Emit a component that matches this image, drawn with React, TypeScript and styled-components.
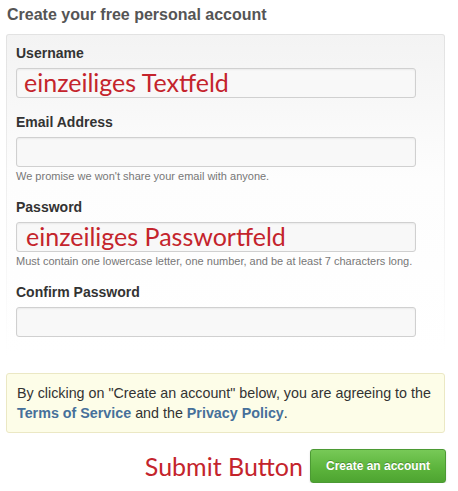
import React from 'react'
import styled, { createGlobalStyle } from 'styled-components'

const GlobalStyle = createGlobalStyle`
    html, body {
        margin: 0;
        padding: 0;
        background: #fff;
    }
    body {
        font-family: "Liberation Sans", Arial, sans-serif;
    }
`

const Page = styled.div`
    width: 439px;
    padding: 5px 0 0 6px;
`

const Title = styled.h2`
    margin: 0 0 10px 1px;
    font-size: 16px;
    line-height: 19px;
    font-weight: bold;
    color: #555;
`

const Panel = styled.div`
    border: 1px solid transparent;
    border-bottom: 0;
    border-radius: 3px 3px 0 0;
    background:
        linear-gradient(#f3f3f3, #fdfdfd 45%, #fff 100%) padding-box,
        linear-gradient(#e2e2e2, #f3f3f3 60%, #fff 100%) border-box;
    padding: 9px 29px 18px 9px;
`

const Field = styled.div`
    display: flex;
    flex-direction: column;
    align-items: flex-start;

    & + & {
        margin-top: 15px;
    }
`

const Label = styled.label`
    font-size: 14px;
    line-height: 18px;
    font-weight: bold;
    color: #333;
    margin-bottom: 6px;
`

const Input = styled.input<{ $indent?: number }>`
    box-sizing: border-box;
    width: 400px;
    height: 30px;
    margin: 0;
    border: 1px solid #d0d0d0;
    border-radius: 3px;
    background: #f8f8f8;
    box-shadow: inset 0 1px 2px rgba(0, 0, 0, 0.06);
    padding: 0 0 2px ${p => p.$indent ?? 7}px;
    font-family: Lato, "Open Sans", sans-serif;
    font-size: 25px;
    color: #c4242c;
    outline: none;
`

const Hint = styled.p`
    margin: 2px 0 0;
    font-size: 11px;
    line-height: 14px;
    color: #777;
`

const Notice = styled.div`
    margin-top: 18px;
    border: 1px solid #ebe8c4;
    border-radius: 3px;
    background: #fdfde8;
    padding: 9px 6px 9px 10px;
    font-size: 14.3px;
    line-height: 20px;
    color: #333;

    a {
        color: #46709a;
        font-weight: bold;
        text-decoration: none;
    }
`

const Actions = styled.div`
    display: flex;
    justify-content: flex-end;
    align-items: center;
    gap: 7px;
    margin: 16px -1px 0 0;
`

const Annotation = styled.span`
    font-family: Lato, "Open Sans", sans-serif;
    font-size: 25px;
    color: #c4242c;
`

const SubmitButton = styled.button`
    height: 34px;
    width: 136px;
    border: 1px solid #4c9a34;
    border-radius: 3px;
    background: linear-gradient(#77c957, #5bb33b 60%, #4ea431);
    box-shadow: 0 1px 2px rgba(0, 0, 0, 0.15);
    color: #fff;
    font-family: "Liberation Sans", Arial, sans-serif;
    font-size: 12px;
    font-weight: bold;
    text-shadow: 0 -1px 0 rgba(0, 0, 0, 0.25);
    cursor: pointer;
`

const fields = [
    { label: 'Username', value: 'einzeiliges Textfeld', hint: '', indent: 7 },
    { label: 'Email Address', value: '', hint: "We promise we won't share your email with anyone.", indent: 7 },
    { label: 'Password', value: 'einzeiliges Passwortfeld', hint: 'Must contain one lowercase letter, one number, and be at least 7 characters long.', indent: 9 },
    { label: 'Confirm Password', value: '', hint: '', indent: 7 },
]

const App: React.FC = () => {
    return (
        <Page>
            <GlobalStyle />
            <Title>Create your free personal account</Title>

            <Panel>
                {fields.map((f, index) => (
                    <Field key={index}>
                        <Label>{f.label}</Label>
                        <Input type="text" defaultValue={f.value} $indent={f.indent} readOnly />
                        {f.hint && <Hint>{f.hint}</Hint>}
                    </Field>
                ))}
            </Panel>

            <Notice>
                By clicking on "Create an account" below, you are agreeing to the{' '}
                <a href="#">Terms of Service</a> and the <a href="#">Privacy Policy</a>.
            </Notice>

            <Actions>
                <Annotation>Submit Button</Annotation>
                <SubmitButton>Create an account</SubmitButton>
            </Actions>
        </Page>
    )
}

export default App
